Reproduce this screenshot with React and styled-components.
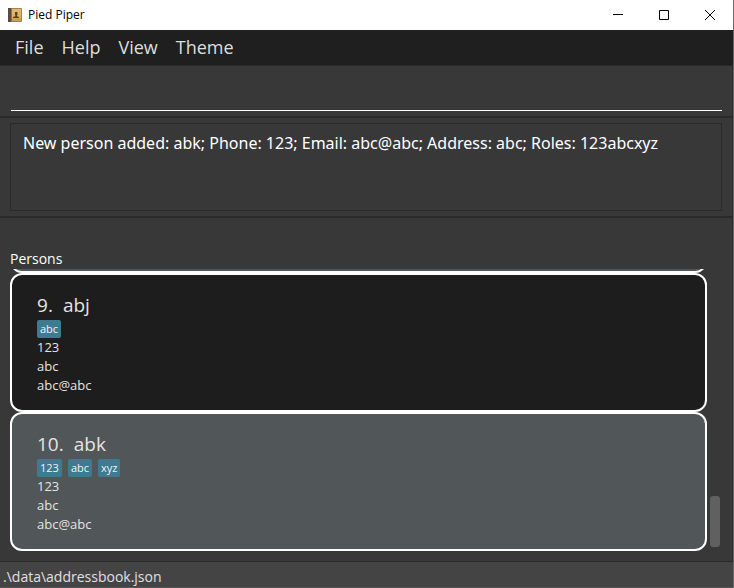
import React from "react";
import styled, { createGlobalStyle } from "styled-components";

const Global = createGlobalStyle`
  * { box-sizing: border-box; }
  body { margin: 0; background: #383838; font-family: "Open Sans", "Noto Sans", sans-serif; }
  button, input { font-family: inherit; }
`;

const Window = styled.div`
  display: flex;
  flex-direction: column;
  min-height: 100vh;
  border-right: 1px solid #6a6a6a;
  background: #383838;
  color: #fff;
`;

const TitleBar = styled.header`
  display: flex;
  align-items: center;
  height: 30px;
  padding-left: 8px;
  background: #fff;
  color: #000;
`;

const Title = styled.h1`
  flex: 1;
  margin: 0 0 0 6px;
  font-size: 12px;
  line-height: 16px;
  font-weight: 400;
`;

const WindowButton = styled.button`
  display: grid;
  place-items: center;
  width: 46px;
  height: 28px;
  padding: 0;
  border: 0;
  background: transparent;
`;

const MenuBar = styled.nav`
  display: flex;
  align-items: flex-start;
  gap: 18px;
  height: 36px;
  padding: 5px 15px;
  background: #1f1f1f;
  border-bottom: 1px solid #2a2a2a;
`;

const MenuButton = styled.button`
  padding: 0;
  border: 0;
  background: transparent;
  color: #dedede;
  font-size: 18px;
  line-height: 24px;
`;

const Content = styled.div`
  flex: 1;
  display: flex;
  flex-direction: column;
  border-right: 1px solid #2a2a2a;
`;

const CommandPane = styled.form`
  height: 52px;
  padding: 5px 10px 5px 11px;
  border-bottom: 2px solid #2a2a2a;
`;

const CommandInput = styled.input`
  display: block;
  width: 100%;
  height: 40px;
  padding: 0 4px;
  border: 0;
  border-bottom: 1px solid #fff;
  outline: 0;
  background: transparent;
  color: #fff;
  font-size: 16px;
`;

const ResultPane = styled.section`
  padding: 5px 10px;
  border-bottom: 2px solid #2a2a2a;
`;

const Result = styled.output`
  display: block;
  min-height: 88px;
  padding: 7px 12px;
  border: 1px solid #2a2a2a;
  font-family: "Noto Sans", sans-serif;
  font-size: 16px;
  line-height: 24px;
`;

const PersonsPane = styled.main`
  flex: 1;
  display: flex;
  flex-direction: column;
  padding: 30px 12px 10px 10px;
`;

const Heading = styled.h2`
  margin: 0;
  font-size: 14px;
  line-height: 21px;
  font-weight: 400;
`;

const ListView = styled.div`
  flex: 1;
  display: flex;
  gap: 3px;
  min-height: 282px;
`;

const List = styled.ul`
  flex: 1;
  display: flex;
  flex-direction: column;
  justify-content: flex-end;
  height: 282px;
  margin: 0;
  padding: 0;
  overflow: hidden;
  list-style: none;
`;

const Card = styled.li`
  flex: none;
  height: 139px;
  padding: 16px 25px;
  border: 2px solid #fff;
  border-radius: 12px;
  background: ${(p) => (p.$tone === "light" ? "#515658" : "#1d1d1d")};
  color: #e4e4e4;
`;

const Name = styled.h3`
  display: flex;
  gap: 10px;
  margin: 0 0 1px;
  font-size: 19px;
  line-height: 28px;
  font-weight: 400;
`;

const Roles = styled.div`
  display: flex;
  gap: 6px;
  height: 18px;
`;

const Role = styled.span`
  padding: 0 3px;
  border-radius: 2px;
  background: #3e7b91;
  color: #f2f2f2;
  font-size: 11px;
  line-height: 18px;
`;

const Detail = styled.p`
  margin: 0;
  font-size: 13px;
  line-height: 19px;
`;

const ScrollTrack = styled.div`
  display: flex;
  flex-direction: column;
  justify-content: flex-end;
  width: 10px;
  padding-bottom: 4px;
`;

const ScrollThumb = styled.div`
  height: 51px;
  border-radius: 3px;
  background: #606060;
`;

const StatusBar = styled.footer`
  height: 27px;
  padding: 3px 3px 0;
  border-top: 1px solid #2a2a2a;
  border-bottom: 1px solid #555;
  background: #444;
  color: #e0e0e0;
  font-size: 14px;
  line-height: 24px;
`;

const persons = [
  { id: 8, tone: "light" },
  { id: 9, name: "abj", roles: ["abc"], phone: "123", address: "abc", email: "abc@abc", tone: "dark" },
  { id: 10, name: "abk", roles: ["123", "abc", "xyz"], phone: "123", address: "abc", email: "abc@abc", tone: "light" },
];

function BookIcon() {
  return (
    <svg width="14" height="14" viewBox="0 0 14 14" aria-hidden="true">
      <defs>
        <linearGradient id="cover" x1="0" y1="0" x2="0" y2="1">
          <stop offset="0" stopColor="#dcb878" />
          <stop offset="0.55" stopColor="#e0b260" />
          <stop offset="1" stopColor="#c99745" />
        </linearGradient>
      </defs>
      <rect width="14" height="14" rx="1" fill="#a98349" />
      <path d="M0 0h3v14H0z" fill="#594a43" />
      <path d="M3 0h1v14H3z" fill="#8b7452" />
      <path d="M4 1h9v12H4z" fill="url(#cover)" />
      <path d="M7 4h2.5v2.5L9 7.5v.8l2 .7v1H5V9l2.3-.7v-.8L7 6.5z" fill="#53442d" />
    </svg>
  );
}

function PersonCard({ person }) {
  return (
    <Card $tone={person.tone}>
      {person.name && (
        <>
          <Name><span>{person.id}.</span><span>{person.name}</span></Name>
          <Roles>{person.roles.map((role) => <Role key={role}>{role}</Role>)}</Roles>
          <Detail>{person.phone}</Detail>
          <Detail>{person.address}</Detail>
          <Detail>{person.email}</Detail>
        </>
      )}
    </Card>
  );
}

export default function App() {
  return (
    <>
      <Global />
      <Window>
        <TitleBar>
          <BookIcon />
          <Title>Pied Piper</Title>
          <WindowButton aria-label="Minimize">
            <svg width="10" height="10"><path d="M0 4h10v1H0z" /></svg>
          </WindowButton>
          <WindowButton aria-label="Maximize">
            <svg width="10" height="10"><path d="M.5.5h9v9h-9z" fill="none" stroke="#000" /></svg>
          </WindowButton>
          <WindowButton aria-label="Close">
            <svg width="10" height="10"><path d="M0 0l10 10M10 0L0 10" fill="none" stroke="#000" /></svg>
          </WindowButton>
        </TitleBar>
        <MenuBar>
          {["File", "Help", "View", "Theme"].map((label) => <MenuButton key={label}>{label}</MenuButton>)}
        </MenuBar>
        <Content>
          <CommandPane onSubmit={(e) => e.preventDefault()}>
            <CommandInput type="text" aria-label="Command" />
          </CommandPane>
          <ResultPane>
            <Result>New person added: abk; Phone: 123; Email: abc@abc; Address: abc; Roles: 123abcxyz</Result>
          </ResultPane>
          <PersonsPane>
            <Heading>Persons</Heading>
            <ListView>
              <List>{persons.map((p) => <PersonCard key={p.id} person={p} />)}</List>
              <ScrollTrack><ScrollThumb /></ScrollTrack>
            </ListView>
          </PersonsPane>
        </Content>
        <StatusBar>.\data\addressbook.json</StatusBar>
      </Window>
    </>
  );
}
